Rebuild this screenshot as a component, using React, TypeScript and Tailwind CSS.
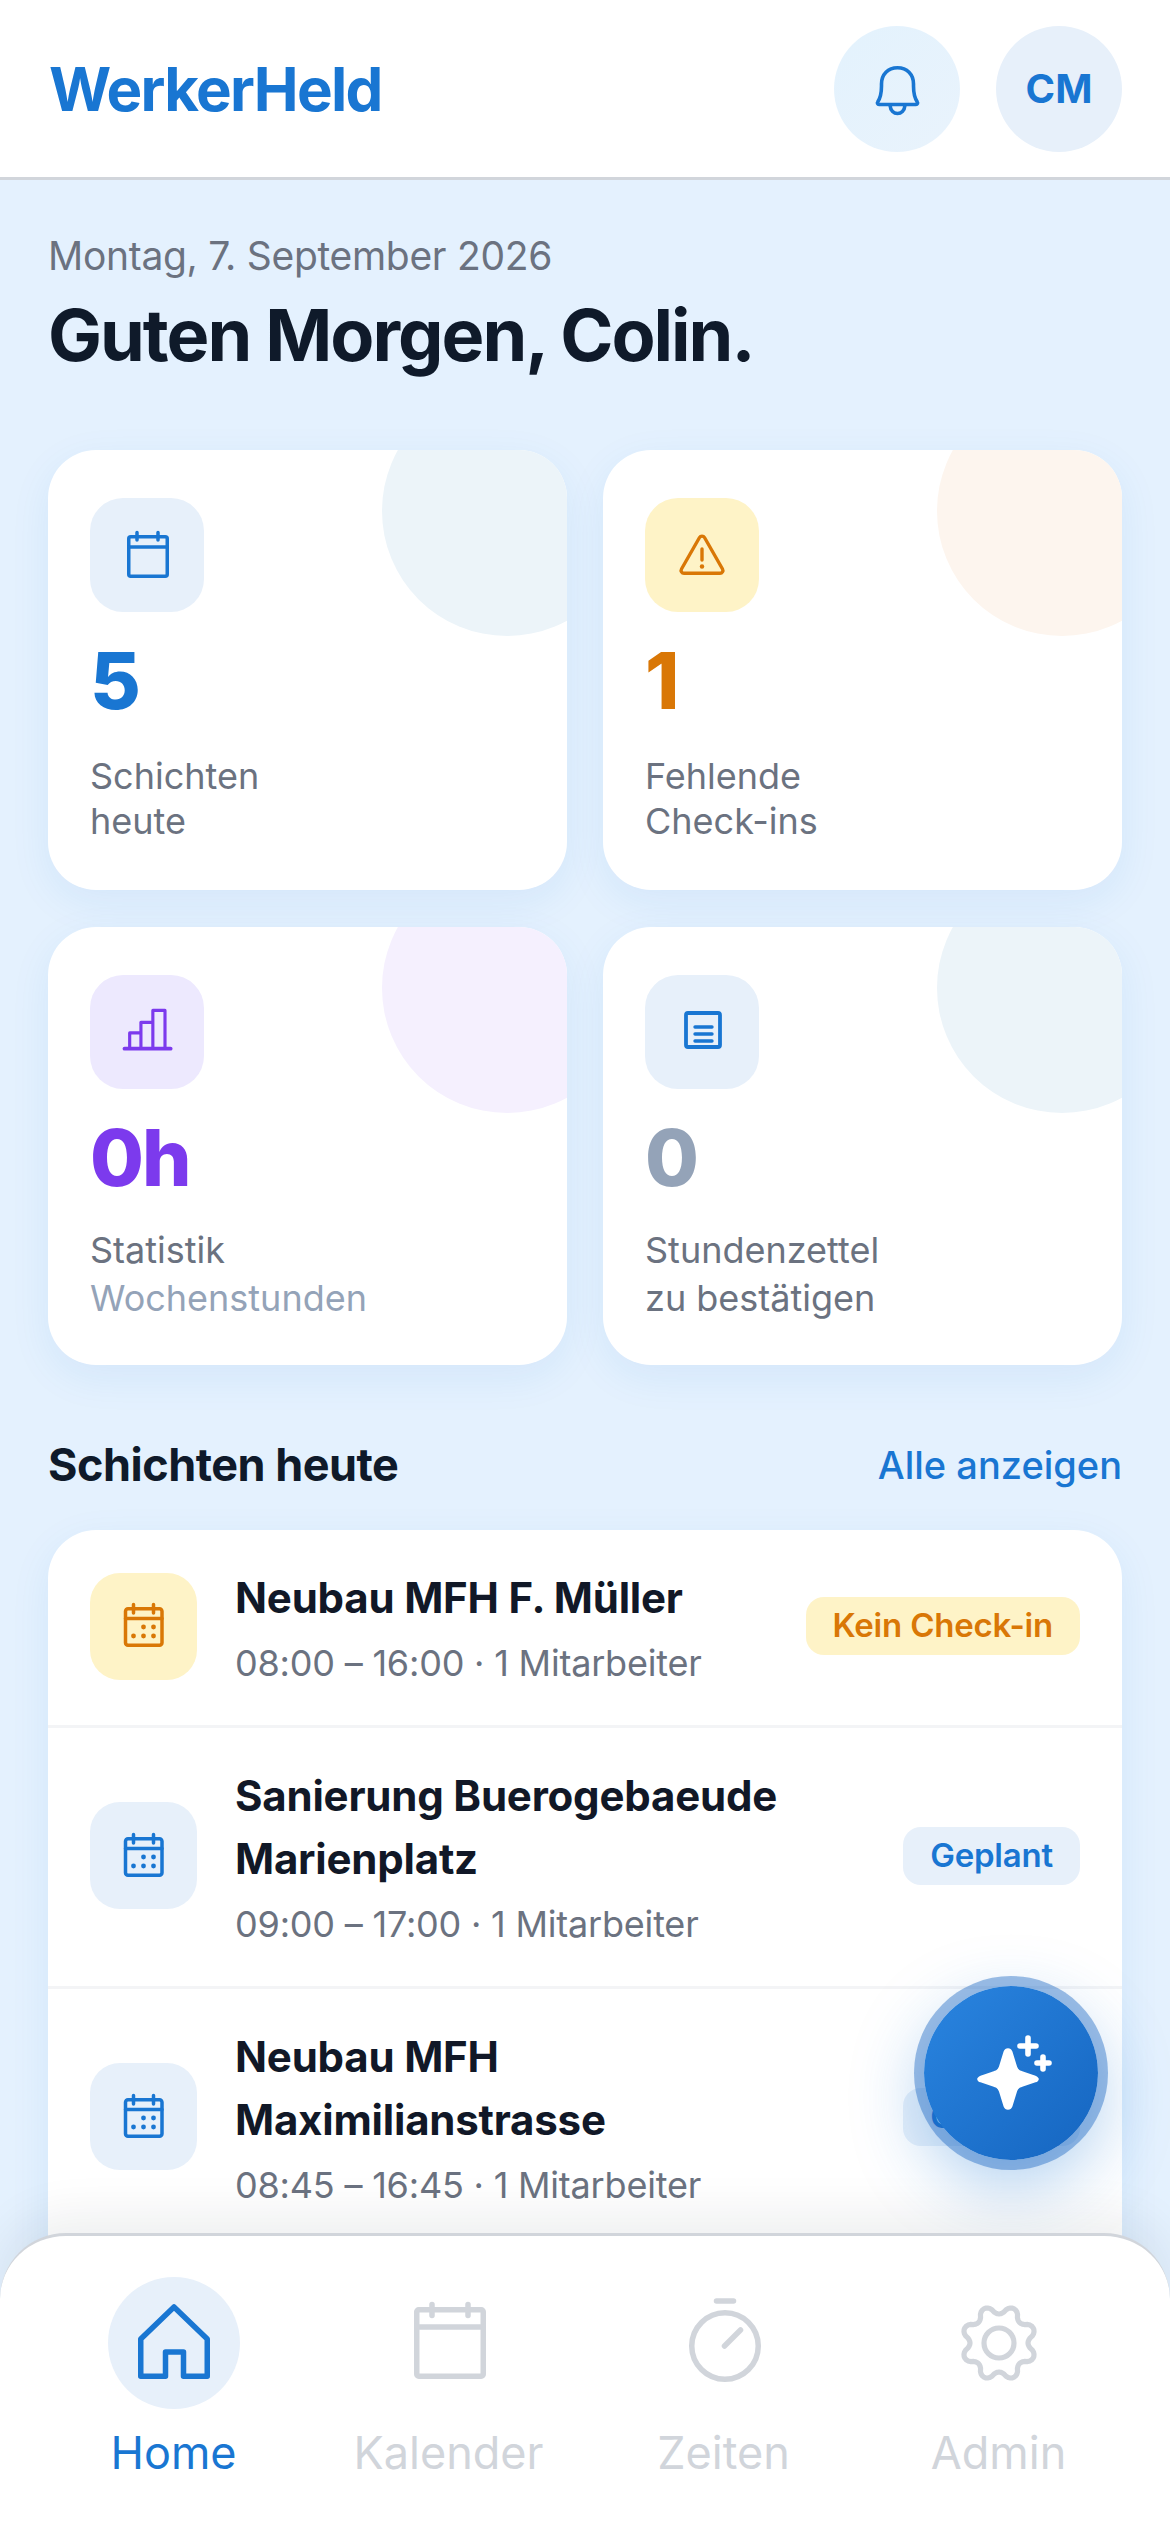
const gearPath = Array.from({ length: 120 }, (_, i) => {
  const a = (i / 120) * Math.PI * 2;
  const c = Math.cos(8 * a);
  const r = 33.2 - 4.2 * Math.sign(c) * Math.pow(Math.abs(c), 0.7);
  return `${i === 0 ? "M" : "L"}${(48 + r * Math.sin(a)).toFixed(2)} ${(48 - r * Math.cos(a)).toFixed(2)}`;
}).join("") + "Z";

function BellIcon() {
  return (
    <svg width="60" height="60" viewBox="0 0 60 60" fill="none" stroke="#1976d2" strokeWidth="3.6" strokeLinecap="round" strokeLinejoin="round">
      <path d="M12 45.5H49c1.5 0 2-1.5 1.3-2.5C47 38 46.5 33 46.5 27v-2C46.5 15.5 40 8.75 30.5 8.75S14.5 15.5 14.5 25v2c0 6-.5 11-3.8 16-.7 1-.2 2.5 1.3 2.5z" />
      <path d="M23 46c.5 6 4 8.5 7.5 8.5s7-2.5 7.5-8.5" />
    </svg>
  );
}

function CalPlain() {
  return (
    <svg width="54" height="54" viewBox="0 0 54 54" fill="none" stroke="#1976d2" strokeWidth="3.5" strokeLinecap="round" strokeLinejoin="round">
      <rect x="8.75" y="8.75" width="38.5" height="39.5" rx="2" />
      <path d="M8.75 19h38.5M17 4.5V12M38 4.5V12" />
    </svg>
  );
}

function Warn() {
  return (
    <svg width="54" height="54" viewBox="0 0 54 54" fill="none" stroke="#d97706" strokeWidth="3.4" strokeLinecap="round" strokeLinejoin="round">
      <path d="M24.5 9.5c1.1-1.9 3.9-1.9 5 0l18 31.5c1.1 1.9-.3 4.3-2.5 4.3H9c-2.2 0-3.6-2.4-2.5-4.3z" />
      <path d="M27 21v11" />
      <path d="M27 38.5h.02" strokeWidth="4.4" />
    </svg>
  );
}

function CalDots({ color }: { color: string }) {
  return (
    <svg width="54" height="54" viewBox="0 0 54 54" fill="none" stroke={color} strokeWidth="3.5" strokeLinecap="round" strokeLinejoin="round">
      <rect x="8.5" y="9.75" width="36.5" height="36.5" rx="2.5" />
      <path d="M8.5 19.5H45M16.5 5.5V14M36.5 5.5V14" />
      <g fill={color} stroke="none">
        <circle cx="26.5" cy="28" r="2.4" />
        <circle cx="36.5" cy="28" r="2.4" />
        <circle cx="16.5" cy="37" r="2.4" />
        <circle cx="26.5" cy="37" r="2.4" />
        <circle cx="36.5" cy="37" r="2.4" />
      </g>
    </svg>
  );
}

function Bars() {
  return (
    <svg width="54" height="54" viewBox="0 0 24 24" fill="none" stroke="#7c3aed" strokeWidth="1.4" strokeLinecap="round" strokeLinejoin="round">
      <path d="M2 19.4h20.5" strokeWidth="1.7" />
      <path d="M4.3 19V12.4h5v6.6M9.3 19V7.7h5.3V19M14.6 19V2.4h5.4V19" />
    </svg>
  );
}

function Doc() {
  return (
    <svg width="54" height="54" viewBox="0 0 54 54" fill="none" stroke="#1976d2" strokeLinecap="round">
      <rect x="11" y="8" width="34" height="34" rx="2" strokeWidth="3.8" />
      <path d="M20 22h17M20 29h17M20 36h17" strokeWidth="3.4" />
    </svg>
  );
}

function Home() {
  return (
    <svg width="96" height="96" viewBox="0 0 96 96" fill="none" stroke="#1976d2" strokeWidth="5.5" strokeLinejoin="round" strokeLinecap="round">
      <path d="M14.75 81.25V44L48 12l33.25 32v37.25H57.5V57H39.5v24.25z" />
    </svg>
  );
}

function NavCal() {
  return (
    <svg width="96" height="96" viewBox="0 0 96 96" fill="none" stroke="#d1d5db" strokeWidth="5.5" strokeLinecap="round" strokeLinejoin="round">
      <rect x="15.75" y="14.75" width="66.5" height="66.5" rx="2" />
      <path d="M15.75 32h66.5M31 9.5v11M67 9.5v11" />
    </svg>
  );
}

function NavTimer() {
  return (
    <svg width="96" height="96" viewBox="0 0 96 96" fill="none" stroke="#d1d5db" strokeWidth="5.5" strokeLinecap="round">
      <path d="M40.5 6h17" />
      <circle cx="49" cy="51" r="33.25" />
      <path d="M48.5 51 64.5 35" />
    </svg>
  );
}

function NavGear() {
  return (
    <svg width="96" height="96" viewBox="0 0 96 96" fill="none" stroke="#d1d5db" strokeWidth="5.2" strokeLinejoin="round">
      <path d={gearPath} />
      <circle cx="48" cy="48" r="15" />
    </svg>
  );
}

function Sparkle() {
  return (
    <svg width="84" height="84" viewBox="0 0 84 84" fill="#fff" stroke="none">
      <path transform="translate(39 48) scale(1.1) translate(-31 -44)" d="M31 16c2 0 3 1 4 3l4 13c1 3 2 4 5 5l12 4c2 1 3 2 3 3s-1 3-3 3l-12 4c-3 1-4 2-5 5l-4 13c-1 2-2 3-4 3s-3-1-4-3l-4-13c-1-3-2-4-5-5L6 47c-2 0-3-2-3-3s1-2 3-3l12-4c3-1 4-2 5-5l4-13c1-2 2-3 4-3z" />
      <path d="M59 7v16M51 15h16M74 26v12M68 32h12" stroke="#fff" strokeWidth="5.6" strokeLinecap="round" fill="none" />
    </svg>
  );
}

const stats = [
  { icon: <CalPlain />, tile: "bg-[#e7f0fa]", blob: "bg-[#ecf4f9]", value: "5", valueCls: "text-[#1976d2]", l1: "Schichten", l2: "heute", l2Cls: "text-[#6b7280]", tall: true },
  { icon: <Warn />, tile: "bg-[#fef3c7]", blob: "bg-[#fdf5ee]", value: "1", valueCls: "text-[#d97706]", l1: "Fehlende", l2: "Check-ins", l2Cls: "text-[#6b7280]", tall: true },
  { icon: <Bars />, tile: "bg-[#ede9fe]", blob: "bg-[#f5f0fe]", value: "0h", valueCls: "text-[#7c3aed] tracking-[-2px]", l1: "Statistik", l2: "Wochenstunden", l2Cls: "text-[#94a3b8]", tall: false },
  { icon: <Doc />, tile: "bg-[#e7f0fa]", blob: "bg-[#ecf4f9]", value: "0", valueCls: "text-[#94a3b8]", l1: "Stundenzettel", l2: "zu bestätigen", l2Cls: "text-[#6b7280]", tall: false },
];

const shifts = [
  { t: ["Neubau MFH F. Müller"], s: "08:00 – 16:00 · 1 Mitarbeiter", b: "Kein Check-in", warn: true },
  { t: ["Sanierung Buerogebaeude", "Marienplatz"], s: "09:00 – 17:00 · 1 Mitarbeiter", b: "Geplant", warn: false },
  { t: ["Neubau MFH", "Maximilianstrasse"], s: "08:45 – 16:45 · 1 Mitarbeiter", b: "Geplant", warn: false },
];

export default function App() {
  return (
    <div className="relative h-[2532px] w-[1170px] overflow-hidden bg-[#e4f1fe] font-['Inter',sans-serif]">
      <header className="flex h-[180px] items-center justify-between border-b-[3px] border-[#d1d5db] bg-white pl-[49px] pr-[48px]">
        <div className="text-[60px] font-bold tracking-[-1.7px] text-[#1976d2]">WerkerHeld</div>
        <div className="flex gap-[36px]">
          <div className="flex h-[126px] w-[126px] items-center justify-center rounded-full bg-gradient-to-br from-[#e3f2fd] to-[#e9f3fc]">
            <BellIcon />
          </div>
          <div className="flex h-[126px] w-[126px] items-center justify-center rounded-full bg-[#e7f0fa] text-[40px] font-bold text-[#1976d2]">CM</div>
        </div>
      </header>

      <main className="px-[48px] pt-[49px]">
        <div className="h-[54px] text-[39px] leading-[54px] tracking-[-0.3px] text-[#6b7280]">Montag, 7. September 2026</div>
        <h1 className="mt-[7px] h-[90px] text-[72px] font-bold leading-[90px] tracking-[-2px] text-[#0f1a2a]">Guten Morgen, Colin.</h1>

        <div className="mt-[70px] grid grid-cols-2 gap-x-[36px] gap-y-[37px]">
          {stats.map((c) => (
            <div key={c.l1} className={`relative overflow-hidden rounded-[48px] bg-white px-[42px] pt-[48px] shadow-[0_12px_40px_rgba(25,118,210,0.08)] ${c.tall ? "h-[440px]" : "h-[438px]"}`}>
              <div className={`absolute right-[-65px] top-[-64px] h-[250px] w-[250px] rounded-full ${c.blob}`} />
              <div className={`relative flex h-[114px] w-[114px] items-center justify-center rounded-[33px] ${c.tile}`}>{c.icon}</div>
              <div className={`relative mt-[24px] h-[90px] text-[78px] font-extrabold leading-[90px] ${c.valueCls}`}>{c.value}</div>
              <div className={`relative text-[36px] text-[#6b7280] ${c.tall ? "mt-[28px] leading-[45px]" : "mt-[23px] leading-[48px]"}`}>
                <div>{c.l1}</div>
                <div className={c.l2Cls}>{c.l2}</div>
              </div>
            </div>
          ))}
        </div>

        <div className="mt-[70px] flex h-[60px] items-center justify-between">
          <h2 className="text-[45px] font-bold tracking-[-0.5px] text-[#0f1a2a]">Schichten heute</h2>
          <span className="text-[38px] font-medium text-[#1976d2]">Alle anzeigen</span>
        </div>

        <div className="mt-[35px] overflow-hidden rounded-[48px] bg-white pb-[120px] shadow-[0_12px_40px_rgba(25,118,210,0.08)]">
          {shifts.map((r, i) => (
            <div key={i} className={`flex items-center pl-[42px] pr-[42px] pt-[36px] pb-[39px] ${i < 2 ? "border-b-[3px] border-[#f3f4f6]" : ""}`}>
              <div className={`flex h-[107px] w-[107px] shrink-0 items-center justify-center rounded-[30px] ${r.warn ? "bg-[#fef3c7]" : "bg-[#e7f0fa]"}`}>
                <CalDots color={r.warn ? "#d97706" : "#1976d2"} />
              </div>
              <div className="ml-[38px] min-w-0 flex-1">
                <div className="text-[42px] font-bold leading-[63px] tracking-[-0.2px] text-[#111827]">
                  {r.t.map((l) => (
                    <div key={l}>{l}</div>
                  ))}
                </div>
                <div className="mt-[12px] text-[36px] leading-[45px] tracking-[-0.2px] text-[#6b7280]">{r.s}</div>
              </div>
              <span className={`flex h-[58px] shrink-0 items-center rounded-[18px] px-[27px] text-[33px] font-semibold tracking-[-0.2px] ${r.warn ? "bg-[#fef3c7] text-[#d97706]" : "bg-[#e7f0fa] text-[#1976d2]"}`}>{r.b}</span>
            </div>
          ))}
        </div>
      </main>

      <button className="absolute left-[924px] top-[1986px] flex h-[174px] w-[174px] items-center justify-center rounded-full bg-gradient-to-br from-[#2a85e0] to-[#1565c0] shadow-[0_0_0_10px_rgba(25,101,192,0.42),0_24px_72px_rgba(25,118,210,0.38)]">
        <Sparkle />
      </button>

      <nav className="absolute bottom-0 left-0 grid h-[299px] w-[1170px] grid-cols-4 items-start rounded-t-[66px] border-t-[3px] border-[#d1d5db] bg-white pl-[36px] pr-[34px] pt-[41px] shadow-[0_-18px_48px_rgba(17,24,39,0.07)]">
        <div className="flex flex-col items-center">
          <div className="flex h-[132px] w-[132px] items-center justify-center rounded-full bg-[#e7f0fa]"><Home /></div>
          <span className="mt-[21px] text-[45px] leading-[45px] text-[#1976d2]">Home</span>
        </div>
        {[
          { l: "Kalender", i: <NavCal /> },
          { l: "Zeiten", i: <NavTimer /> },
          { l: "Admin", i: <NavGear /> },
        ].map((n) => (
          <div key={n.l} className="flex flex-col items-center text-[#d1d5db]">
            <div className="flex h-[132px] items-center justify-center">{n.i}</div>
            <span className="mt-[21px] text-[45px] leading-[45px]">{n.l}</span>
          </div>
        ))}
      </nav>
    </div>
  );
}
